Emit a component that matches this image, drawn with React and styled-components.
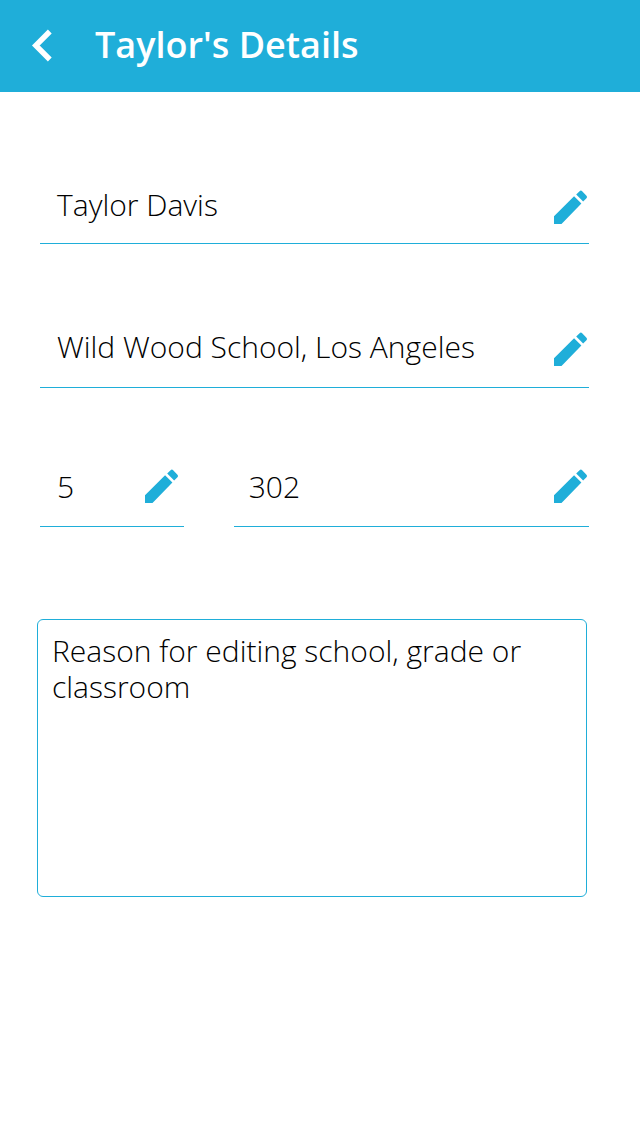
import React from "react";
import styled, { createGlobalStyle } from "styled-components";

const blue = "#1faed9";

const GlobalStyle = createGlobalStyle`
  * { box-sizing: border-box; }
  body { margin: 0; background: #fff; font-family: "Open Sans", sans-serif; }
`;

const Screen = styled.div`
  width: 640px;
  height: 1136px;
  display: flex;
  flex-direction: column;
  background: #fff;
`;

const Header = styled.header`
  height: 92px;
  flex: none;
  display: flex;
  align-items: center;
  padding: 0 0 2px 32px;
  background: ${blue};
  color: #fff;
`;

const BackButton = styled.button`
  width: 63px;
  padding: 2px 0 0;
  border: 0;
  background: none;
  text-align: left;
  svg { display: block; overflow: visible; }
`;

const Title = styled.h1`
  margin: 0;
  font-size: 36px;
  font-weight: 600;
  line-height: 48px;
  white-space: nowrap;
`;

const Form = styled.main`
  display: flex;
  flex-direction: column;
  padding: 68px 51px 0 40px;
`;

const Row = styled.div`
  display: flex;
  gap: 50px;
  margin-bottom: ${(p) => p.$after}px;
`;

const Field = styled.div`
  display: flex;
  align-items: flex-start;
  justify-content: space-between;
  flex: ${(p) => (p.$width ? `0 0 ${p.$width}px` : "1")};
  height: ${(p) => p.$height}px;
  padding: 24px ${(p) => p.$inset || 0}px 0 ${(p) => p.$indent || 17}px;
  border-bottom: 1px solid ${blue};
`;

const Value = styled.span`
  font-size: 30px;
  font-weight: 300;
  line-height: 42px;
  color: #000;
  white-space: nowrap;
`;

const EditIcon = styled.svg`
  flex: none;
  width: 44px;
  height: 44px;
  margin: ${(p) => p.$top}px -3px 0 0;
  fill: ${blue};
`;

const Reason = styled.div`
  width: 550px;
  height: 278px;
  margin-left: -3px;
  padding: 13px 14px;
  border: 1px solid ${blue};
  border-radius: 6px;
  font-size: 30px;
  font-weight: 300;
  line-height: 36px;
  color: #000;
`;

function EditField({ value, iconTop = 1, ...rest }) {
  return (
    <Field {...rest}>
      <Value>{value}</Value>
      <EditIcon viewBox="-0.27 -0.27 24 24" $top={iconTop}>
        <path d="M3 16.8V21h4.1L17.95 9.8l-4-3.95L3 16.8zM20.71 6.94a.996.996 0 0 0 0-1.41l-2.34-2.4a.996.996 0 0 0-1.41 0l-1.85 1.8 3.8 3.8 1.8-1.79z" />
      </EditIcon>
    </Field>
  );
}

export default function App() {
  return (
    <>
      <GlobalStyle />
      <Screen>
        <Header>
          <BackButton aria-label="Back">
            <svg width="20" height="32" viewBox="0 0 20 32">
              <path d="M17.8 1.5L3.8 15.5l14 14" fill="none" stroke="#fff" strokeWidth="5.4" />
            </svg>
          </BackButton>
          <Title>Taylor's Details</Title>
        </Header>
        <Form>
          <Row $after={58}>
            <EditField value="Taylor Davis" $height={84} />
          </Row>
          <Row $after={54}>
            <EditField value="Wild Wood School, Los Angeles" $height={86} />
          </Row>
          <Row $after={92}>
            <EditField value="5" iconTop={-2} $width={144} $height={85} $inset={4} />
            <EditField value="302" iconTop={-2} $height={85} $indent={14.7} />
          </Row>
          <Reason>Reason for editing school, grade or classroom</Reason>
        </Form>
      </Screen>
    </>
  );
}
